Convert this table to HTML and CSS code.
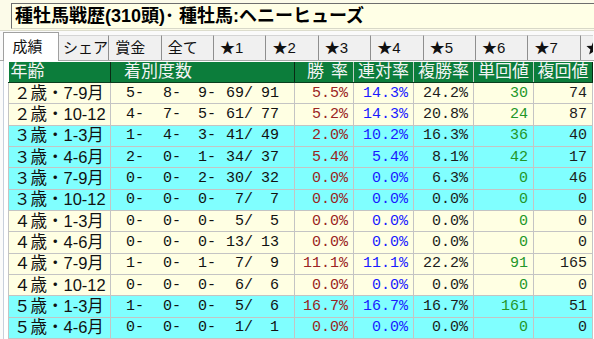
FILE: index.html
```html
<!DOCTYPE html>
<html lang="ja">
<head>
<meta charset="utf-8">
<title>種牡馬戦歴</title>
<link rel="stylesheet" href="styles.css">
</head>
<body>
<div class="app">
  <div class="titlebar">
    <div class="title">種牡馬戦歴(310頭)･ 種牡馬:ヘニーヒューズ</div>
  </div>
  <div class="tabs">
    <div class="tab active">成績</div>
    <div class="tab">シェア</div>
    <div class="tab">賞金</div>
    <div class="tab">全て</div>
    <div class="tab">★1</div>
    <div class="tab">★2</div>
    <div class="tab">★3</div>
    <div class="tab">★4</div>
    <div class="tab">★5</div>
    <div class="tab">★6</div>
    <div class="tab">★7</div>
    <div class="tab tab-more"><svg class="star" width="15" height="15" viewBox="0 0 24 24"><path d="M12 1.5l3.1 7.6 8.2.6-6.3 5.3 2 8-7-4.4-7 4.4 2-8L.7 9.7l8.2-.6z" fill="#111"/></svg></div>
  </div>
  <div class="panel">
    <table class="stats">
      <colgroup>
        <col class="c-age"><col class="c-rec"><col class="c-n59"><col class="c-n60"><col class="c-n60"><col class="c-n60"><col class="c-n59">
      </colgroup>
      <thead>
        <tr>
          <th class="h-age">年齢</th>
          <th class="h-rec">着別度数</th>
          <th class="h-win">勝率</th>
          <th class="h-num">連対率</th>
          <th class="h-num">複勝率</th>
          <th class="h-num">単回値</th>
          <th class="h-num h-last">複回値</th>
        </tr>
      </thead>
      <tbody>
        <tr class="cream">
          <td class="age">２歳・7-9月</td>
          <td class="rec"><div class="rl"><span class="r1">5-</span><span class="r2">8-</span><span class="r3">9-</span><span class="r4">69/</span><span class="r5">91</span></div></td>
          <td class="n win">5.5%</td><td class="n ren">14.3%</td><td class="n fuku">24.2%</td><td class="n tan">30</td><td class="n fk">74</td>
        </tr>
        <tr class="cream">
          <td class="age">２歳・10-12</td>
          <td class="rec"><div class="rl"><span class="r1">4-</span><span class="r2">7-</span><span class="r3">5-</span><span class="r4">61/</span><span class="r5">77</span></div></td>
          <td class="n win">5.2%</td><td class="n ren">14.3%</td><td class="n fuku">20.8%</td><td class="n tan">24</td><td class="n fk">87</td>
        </tr>
        <tr class="cyan">
          <td class="age">３歳・1-3月</td>
          <td class="rec"><div class="rl"><span class="r1">1-</span><span class="r2">4-</span><span class="r3">3-</span><span class="r4">41/</span><span class="r5">49</span></div></td>
          <td class="n win">2.0%</td><td class="n ren">10.2%</td><td class="n fuku">16.3%</td><td class="n tan">36</td><td class="n fk">40</td>
        </tr>
        <tr class="cyan">
          <td class="age">３歳・4-6月</td>
          <td class="rec"><div class="rl"><span class="r1">2-</span><span class="r2">0-</span><span class="r3">1-</span><span class="r4">34/</span><span class="r5">37</span></div></td>
          <td class="n win">5.4%</td><td class="n ren">5.4%</td><td class="n fuku">8.1%</td><td class="n tan">42</td><td class="n fk">17</td>
        </tr>
        <tr class="cyan">
          <td class="age">３歳・7-9月</td>
          <td class="rec"><div class="rl"><span class="r1">0-</span><span class="r2">0-</span><span class="r3">2-</span><span class="r4">30/</span><span class="r5">32</span></div></td>
          <td class="n win">0.0%</td><td class="n ren">0.0%</td><td class="n fuku">6.3%</td><td class="n tan">0</td><td class="n fk">46</td>
        </tr>
        <tr class="cyan">
          <td class="age">３歳・10-12</td>
          <td class="rec"><div class="rl"><span class="r1">0-</span><span class="r2">0-</span><span class="r3">0-</span><span class="r4">7/</span><span class="r5">7</span></div></td>
          <td class="n win">0.0%</td><td class="n ren">0.0%</td><td class="n fuku">0.0%</td><td class="n tan">0</td><td class="n fk">0</td>
        </tr>
        <tr class="cream">
          <td class="age">４歳・1-3月</td>
          <td class="rec"><div class="rl"><span class="r1">0-</span><span class="r2">0-</span><span class="r3">0-</span><span class="r4">5/</span><span class="r5">5</span></div></td>
          <td class="n win">0.0%</td><td class="n ren">0.0%</td><td class="n fuku">0.0%</td><td class="n tan">0</td><td class="n fk">0</td>
        </tr>
        <tr class="cream">
          <td class="age">４歳・4-6月</td>
          <td class="rec"><div class="rl"><span class="r1">0-</span><span class="r2">0-</span><span class="r3">0-</span><span class="r4">13/</span><span class="r5">13</span></div></td>
          <td class="n win">0.0%</td><td class="n ren">0.0%</td><td class="n fuku">0.0%</td><td class="n tan">0</td><td class="n fk">0</td>
        </tr>
        <tr class="cream">
          <td class="age">４歳・7-9月</td>
          <td class="rec"><div class="rl"><span class="r1">1-</span><span class="r2">0-</span><span class="r3">1-</span><span class="r4">7/</span><span class="r5">9</span></div></td>
          <td class="n win">11.1%</td><td class="n ren">11.1%</td><td class="n fuku">22.2%</td><td class="n tan">91</td><td class="n fk">165</td>
        </tr>
        <tr class="cream">
          <td class="age">４歳・10-12</td>
          <td class="rec"><div class="rl"><span class="r1">0-</span><span class="r2">0-</span><span class="r3">0-</span><span class="r4">6/</span><span class="r5">6</span></div></td>
          <td class="n win">0.0%</td><td class="n ren">0.0%</td><td class="n fuku">0.0%</td><td class="n tan">0</td><td class="n fk">0</td>
        </tr>
        <tr class="cyan">
          <td class="age">５歳・1-3月</td>
          <td class="rec"><div class="rl"><span class="r1">1-</span><span class="r2">0-</span><span class="r3">0-</span><span class="r4">5/</span><span class="r5">6</span></div></td>
          <td class="n win">16.7%</td><td class="n ren">16.7%</td><td class="n fuku">16.7%</td><td class="n tan">161</td><td class="n fk">51</td>
        </tr>
        <tr class="cyan">
          <td class="age">５歳・4-6月</td>
          <td class="rec"><div class="rl"><span class="r1">0-</span><span class="r2">0-</span><span class="r3">0-</span><span class="r4">1/</span><span class="r5">1</span></div></td>
          <td class="n win">0.0%</td><td class="n ren">0.0%</td><td class="n fuku">0.0%</td><td class="n tan">0</td><td class="n fk">0</td>
        </tr>
      </tbody>
    </table>
  </div>
</div>
</body>
</html>
```

FILE: styles.css
```css
html, body {
  margin: 0;
  padding: 0;
  background: #ffffff;
}

body {
  font-family: "Liberation Sans", "Noto Sans CJK JP", sans-serif;
  color: #111;
}

.app {
  width: 594px;
  height: 339px;
  overflow: hidden;
  display: flex;
  flex-direction: column;
  background: #fbfbfb;
}

/* ---------- title ---------- */
.titlebar {
  height: 31px;
  flex: 0 0 31px;
  box-sizing: border-box;
  padding: 3px 0 0 11px;
  background: #fcfbe9;
  border-bottom: 1px solid #dcdccc;
}

.title {
  height: 26px;
  box-sizing: border-box;
  border-top: 1px solid #6e6e6e;
  border-left: 1px solid #6e6e6e;
  border-bottom: 1px solid #d8d8c8;
  background: #ffffe6;
  padding-left: 3px;
  font-size: 18px;
  font-weight: 700;
  line-height: 24px;
  white-space: nowrap;
  color: #000;
}

/* ---------- tabs ---------- */
.tabs {
  flex: 0 0 30px;
  height: 30px;
  box-sizing: border-box;
  display: flex;
  align-items: flex-end;
  padding-left: 4.5px;
  background: #fafafa;
  border-bottom: 1px solid #a8a8a8;
  white-space: nowrap;
}

.tab {
  flex: 0 0 52.4px;
  box-sizing: border-box;
  height: 25px;
  border-top: 1px solid #d4d4d4;
  border-right: 1px solid #8e8e8e;
  background: #f0f0f0;
  font-size: 15px;
  line-height: 23px;
  padding-left: 6px;
  color: #111;
  overflow: hidden;
}

.tab.tab-more {
  flex: 0 0 12px;
  padding-left: 5px;
  border-right: none;
}

.star {
  display: block;
  margin-top: 4px;
}

.tab.active {
  flex-basis: 56.4px;
  margin: 0 -2px -1px -2px;
  height: 29px;
  background: #ffffff;
  border: 1px solid #a0a0a0;
  border-bottom: none;
  padding-left: 9px;
  line-height: 28px;
  position: relative;
  z-index: 1;
}

/* ---------- panel / table ---------- */
.panel {
  flex: 1 1 auto;
  box-sizing: border-box;
  margin-left: 3px;
  border-left: 1px solid #c8d0dc;
  padding: 1px 0 0 4px;
  background: #ffffff;
}

.stats {
  border-collapse: collapse;
  table-layout: fixed;
  width: 584px;
}

.c-age { width: 102px; }
.c-rec { width: 184px; }
.c-n59 { width: 59px; }
.c-n60 { width: 60px; }

.stats th {
  height: 20px;
  padding: 0;
  background: #0c7d3b;
  color: #f4f4f4;
  font-size: 17px;
  font-weight: 400;
  line-height: 20px;
  white-space: nowrap;
  border-right: 1px solid #bfcfc4;
  border-bottom: 1px solid #0a3d1e;
}

.stats th.h-age {
  text-align: left;
  padding-left: 2px;
  border-right-color: #0a2a14;
}

.stats th.h-rec {
  text-align: left;
  padding-left: 13px;
  border-right-color: #0a2a14;
}

.stats th.h-win {
  text-align: left;
  padding-left: 12px;
  letter-spacing: 7px;
}

.stats th.h-num {
  text-align: center;
}

.stats th.h-last {
  border-right-color: #0a2a14;
}

.stats tbody tr {
  height: 21.33px;
}

.stats td {
  padding: 0;
  border: 1px solid #c4c4c4;
  font-size: 16.5px;
  line-height: 19px;
  white-space: nowrap;
  overflow: hidden;
}

.stats tr.cream td { background: #ffffe3; }
.stats tr.cyan td { background: #80ffff; }

.stats td.age {
  padding-left: 5px;
  color: #111;
}

.stats td.rec,
.stats td.n {
  font-family: "Liberation Mono", monospace;
  font-size: 15px;
}

.rl {
  display: flex;
}

.rl span {
  display: block;
  text-align: right;
  color: #111;
}

.rl .r1 { width: 33px; }
.rl .r2 { width: 37px; }
.rl .r3 { width: 35px; }
.rl .r4 { width: 37px; }
.rl .r5 { width: 26px; }

.stats td.n {
  text-align: right;
  padding-right: 5px;
}

.stats td.win { color: #9a2424; }
.stats td.ren { color: #1a1aff; }
.stats td.fuku { color: #1c1c1c; }
.stats td.tan { color: #23962a; }
.stats td.fk { color: #1c1c1c; }
```
